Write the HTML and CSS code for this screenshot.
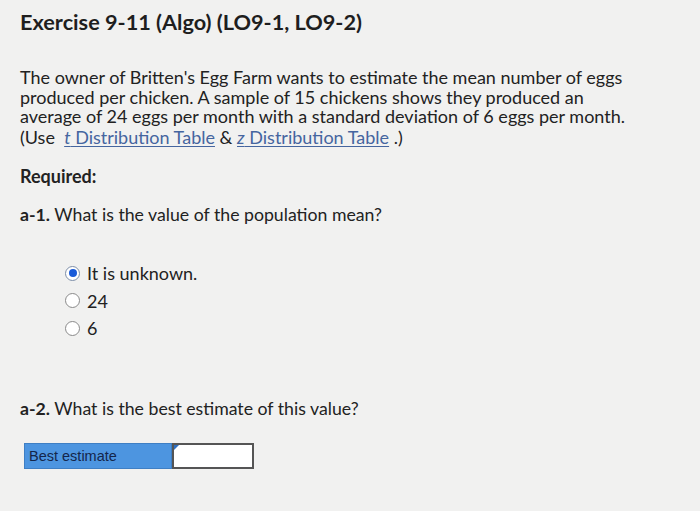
FILE: index.html
```html
<!DOCTYPE html>
<html>
<head>
<meta charset="utf-8">
<link rel="stylesheet" href="styles.css">
</head>
<body>
<div class="page">
  <h1 class="title">Exercise 9-11 (Algo) (LO9-1, LO9-2)</h1>
  <p class="prompt"><span>The owner of Britten's Egg Farm wants to estimate the mean number of eggs produced per chicken. A sample of 15 chickens shows they produced an average of 24 eggs per month with a standard deviation of 6 eggs per month.</span> <span class="prompt-last">(Use&nbsp; <a class="link"><i>t</i> Distribution Table</a> &amp; <a class="link"><i>z</i> Distribution Table</a> .)</span></p>
  <p class="required">Required:</p>
  <p class="question"><b>a-1.</b> What is the value of the population mean?</p>
  <ul class="options">
    <li class="option"><span class="radio checked"></span><span>It is unknown.</span></li>
    <li class="option"><span class="radio"></span><span>24</span></li>
    <li class="option"><span class="radio"></span><span>6</span></li>
  </ul>
  <p class="question q2"><b>a-2.</b> What is the best estimate of this value?</p>
  <div class="answer">
    <div class="answer-label">Best estimate</div>
    <div class="answer-input"></div>
  </div>
</div>
</body>
</html>
```
FILE: styles.css
```css
html, body {
  margin: 0;
  padding: 0;
  background: #f1f1f0;
}
.page {
  padding: 0 20px;
  font-family: Lato, "Open Sans", sans-serif;
  color: #222;
}
.title {
  margin: 0;
  padding-top: 9px;
  font-size: 21.7px;
  line-height: 26px;
  font-weight: 700;
  color: #1e1e1e;
}
.prompt {
  margin: 33px 0 0;
  max-width: 615px;
  font-size: 18px;
  line-height: 19.7px;
}
.prompt-last {
  display: block;
  margin-top: 0.5px;
}
.link {
  color: #45659f;
  text-decoration: underline;
  text-decoration-thickness: 1px;
  text-underline-offset: 2px;
}
.required {
  margin: 19px 0 0;
  font-size: 18px;
  font-weight: 700;
  line-height: 20px;
}
.question {
  margin: 19px 0 0;
  font-size: 17.7px;
  line-height: 20px;
}
.question b { font-weight: 700; }
.options {
  list-style: none;
  margin: 34px 0 0;
  padding: 0 0 0 45px;
}
.option {
  display: flex;
  align-items: center;
  gap: 7px;
  height: 27.5px;
  font-size: 18px;
}
.radio {
  width: 13px;
  height: 13px;
  border-radius: 50%;
  border: 1px solid #8a8a8a;
  background: #fff;
  box-sizing: content-box;
  position: relative;
}
.radio.checked {
  border-color: #7d8ea8;
}
.radio.checked::after {
  content: "";
  position: absolute;
  left: 2.5px;
  top: 2.5px;
  width: 8px;
  height: 8px;
  border-radius: 50%;
  background: #1a5bd8;
}
.q2 {
  margin-top: 57px;
}
.answer {
  margin: 24px 0 0 4px;
  display: flex;
  width: 230px;
  height: 26px;
}
.answer-label {
  width: 148px;
  background: #4d95e0;
  border: 1px solid #3f7fc4;
  box-sizing: border-box;
  font-family: "Liberation Sans", Arial, sans-serif;
  font-size: 14.5px;
  color: #14264a;
  padding: 4px 0 0 4px;
}
.answer-input {
  flex: 1;
  background: #fff;
  border: 2px solid #555;
  box-sizing: border-box;
  position: relative;
}
.answer-input::before {
  content: "";
  position: absolute;
  left: 0;
  top: 0;
  border-style: solid;
  border-width: 5px 5px 0 0;
  border-color: #2f6fc0 transparent transparent transparent;
}
```
